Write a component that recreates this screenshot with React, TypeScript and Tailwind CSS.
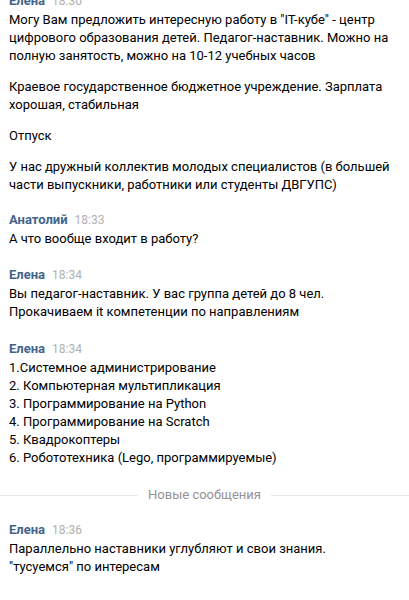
import React from "react";

type Msg = { name: string; time: string; paras: string[][]; first?: boolean };

const Header = ({ name, time }: { name: string; time: string }) => (
  <div className="flex items-baseline h-[18px] leading-[18px] whitespace-nowrap">
    <span className="text-[13px] font-bold text-[#42648b]">{name}</span>
    <span className="ml-[7px] text-[12px] text-[#b0b0b0]">{time}</span>
  </div>
);

const Block = ({ name, time, paras, first }: Msg) => (
  <div className={first ? "mt-[-8px]" : ""}>
    <Header name={name} time={time} />
    <div className="flex flex-col gap-[13px] mt-[1px]">
      {paras.map((p, i) => (
        <div key={i} className="flex flex-col">
          {p.map((l, j) => (
            <div key={j} className="h-[18px] leading-[18px] whitespace-nowrap text-[13px] text-black">
              {l}
            </div>
          ))}
        </div>
      ))}
    </div>
  </div>
);

export default function App() {
  return (
    <div
      className="w-[409px] h-[600px] overflow-hidden bg-white"
      style={{ fontFamily: "Roboto, 'Noto Sans', Arial, sans-serif" }}
    >
      <div className="flex flex-col px-[9px]">
        <Block
          first
          name="Елена"
          time="18:30"
          paras={[
            [
              'Могу Вам предложить интересную работу в "IT-кубе" - центр',
              "цифрового образования детей. Педагог-наставник. Можно на",
              "полную занятость, можно на 10-12 учебных часов",
            ],
            ["Краевое государственное бюджетное учреждение. Зарплата", "хорошая, стабильная"],
            ["Отпуск"],
            [
              "У нас дружный коллектив молодых специалистов (в большей",
              "части выпускники, работники или студенты ДВГУПС)",
            ],
          ]}
        />
        <div className="h-[17px]" />
        <Block name="Анатолий" time="18:33" paras={[["А что вообще входит в работу?"]]} />
        <div className="h-[18px]" />
        <Block
          name="Елена"
          time="18:34"
          paras={[["Вы педагог-наставник. У вас группа детей до 8 чел.", "Прокачиваем it компетенции по направлениям"]]}
        />
        <div className="h-[19px]" />
        <Block
          name="Елена"
          time="18:34"
          paras={[
            [
              "1.Системное администрирование",
              "2. Компьютерная мультипликация",
              "3. Программирование на Python",
              "4. Программирование на Scratch",
              "5. Квадрокоптеры",
              "6. Робототехника (Lego, программируемые)",
            ],
          ]}
        />
      </div>
      <div className="flex items-center mt-[18px] h-[20px]">
        <div className="flex-1 h-px bg-[#e7e8ec]" />
        <span className="px-[10px] text-[13px] text-[#939393] whitespace-nowrap leading-[18px]">Новые сообщения</span>
        <div className="flex-1 h-px bg-[#e7e8ec]" />
      </div>
      <div className="flex flex-col px-[9px] mt-[16px]">
        <Block
          name="Елена"
          time="18:36"
          paras={[["Параллельно наставники углубляют и свои знания.", '"тусуемся" по интересам']]}
        />
        <div className="mt-[20px] text-[13px] text-[#a0a0a0] leading-[18px] whitespace-nowrap">Елена печатает</div>
      </div>
    </div>
  );
}
